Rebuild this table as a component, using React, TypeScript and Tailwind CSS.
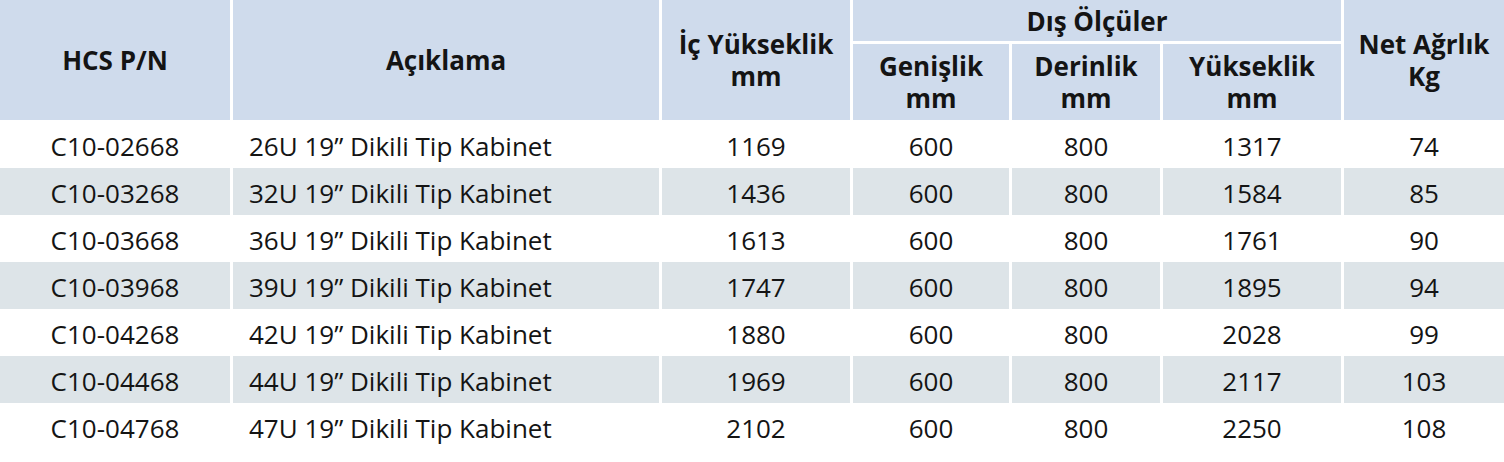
// Kabinet ölçü tablosu

interface Row {
  pn: string;
  desc: string;
  inner: string;
  width: string;
  depth: string;
  height: string;
  weight: string;
}

const rows: Row[] = [
  { pn: "C10-02668", desc: "26U 19” Dikili Tip Kabinet", inner: "1169", width: "600", depth: "800", height: "1317", weight: "74" },
  { pn: "C10-03268", desc: "32U 19” Dikili Tip Kabinet", inner: "1436", width: "600", depth: "800", height: "1584", weight: "85" },
  { pn: "C10-03668", desc: "36U 19” Dikili Tip Kabinet", inner: "1613", width: "600", depth: "800", height: "1761", weight: "90" },
  { pn: "C10-03968", desc: "39U 19” Dikili Tip Kabinet", inner: "1747", width: "600", depth: "800", height: "1895", weight: "94" },
  { pn: "C10-04268", desc: "42U 19” Dikili Tip Kabinet", inner: "1880", width: "600", depth: "800", height: "2028", weight: "99" },
  { pn: "C10-04468", desc: "44U 19” Dikili Tip Kabinet", inner: "1969", width: "600", depth: "800", height: "2117", weight: "103" },
  { pn: "C10-04768", desc: "47U 19” Dikili Tip Kabinet", inner: "2102", width: "600", depth: "800", height: "2250", weight: "108" },
];

const cols = "grid-cols-[230px_426px_188px_156px_148px_178px_160px]";

const Head: React.FC<{ className?: string; children: React.ReactNode }> = ({ className = "", children }) => (
  <div className={`flex items-center justify-center bg-[#cfdbec] text-center text-[26px] leading-[32px] font-bold ${className}`}>
    <div>{children}</div>
  </div>
);

const App: React.FC = () => (
  <div
    className="w-[1504px] h-[462px] bg-white text-[#141414] text-[26px]"
    style={{ fontFamily: '"Open Sans", "Noto Sans", sans-serif' }}
  >
    <div className={`grid ${cols} grid-rows-[41px_76px] gap-[3px]`}>
      <Head className="row-span-2">HCS P/N</Head>
      <Head className="row-span-2">Açıklama</Head>
      <Head className="row-span-2">
        İç Yükseklik
        <br />
        mm
      </Head>
      <Head className="col-span-3">Dış Ölçüler</Head>
      <Head className="row-span-2">
        Net Ağrlık
        <br />
        Kg
      </Head>
      <Head className="col-start-4 row-start-2">
        Genişlik
        <br />
        mm
      </Head>
      <Head className="col-start-5 row-start-2">
        Derinlik
        <br />
        mm
      </Head>
      <Head className="col-start-6 row-start-2">
        Yükseklik
        <br />
        mm
      </Head>
    </div>

    <div className="mt-px">
      {rows.map((r, i) => {
        const bg = i % 2 === 1 ? "bg-[#dde4e8]" : "bg-white";
        return (
          <div key={r.pn} className={`grid ${cols} gap-x-[3px] h-[47px]`}>
            <div className={`${bg} flex items-center justify-center pt-1`}>{r.pn}</div>
            <div className={`${bg} flex items-center pl-4 pt-1`}>{r.desc}</div>
            <div className={`${bg} flex items-center justify-center pt-1`}>{r.inner}</div>
            <div className={`${bg} flex items-center justify-center pt-1`}>{r.width}</div>
            <div className={`${bg} flex items-center justify-center pt-1`}>{r.depth}</div>
            <div className={`${bg} flex items-center justify-center pt-1`}>{r.height}</div>
            <div className={`${bg} flex items-center justify-center pt-1`}>{r.weight}</div>
          </div>
        );
      })}
    </div>
  </div>
);

export default App;
